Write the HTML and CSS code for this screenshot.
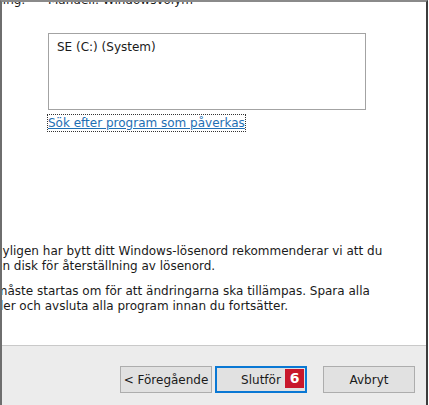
FILE: index.html
```html
<!DOCTYPE html>
<html lang="sv">
<head>
<meta charset="utf-8">
<link rel="stylesheet" href="styles.css">
</head>
<body>
<div class="window">
  <div class="content">
    <div class="inner">
      <div class="row top">
        <span class="label">Beskrivning:</span>
        <span class="value">Manuell: Windowsvolym</span>
      </div>
      <div class="row drives">
        <span class="label">Enheter:</span>
        <div class="value">
          <div class="listbox"><div class="item">SE (C:) (System)</div></div>
          <a class="link" href="#">Sök efter program som påverkas</a>
        </div>
      </div>
      <p class="para first">Om du nyligen har bytt ditt Windows-lösenord rekommenderar vi att du skapar en disk för återställning av lösenord.</p>
      <p class="para">Datorn måste startas om för att ändringarna ska tillämpas. Spara alla öppna filer och avsluta alla program innan du fortsätter.</p>
    </div>
  </div>
  <div class="footer">
    <button class="btn">&lt; Föregående</button>
    <button class="btn primary">Slutför<span class="badge">6</span></button>
    <button class="btn cancel">Avbryt</button>
  </div>
</div>
</body>
</html>
```
FILE: styles.css
```css
html, body {
  margin: 0;
  padding: 0;
  background: #ffffff;
}
body {
  width: 429px;
  height: 405px;
  overflow: hidden;
  font-family: "DejaVu Sans", sans-serif;
  font-size: 12px;
  color: #1a1a1a;
}
.window {
  width: 424px;
  height: 403px;
  border-top: 2px solid #8a8a8a;
  border-left: 2px solid #6e6e6e;
  border-right: 2px solid #3c3c3c;
  display: flex;
  flex-direction: column;
}
.content {
  height: 343px;
  overflow: hidden;
  background: #ffffff;
  border-bottom: 1px solid #c9c9c9;
}
.inner {
  margin-left: -51px;
  width: 480px;
}
.row {
  display: grid;
  grid-template-columns: 97px 1fr;
  line-height: 15px;
}
.top {
  margin-top: -9px;
}
.drives {
  margin-top: 25px;
}
.listbox {
  width: 316px;
  height: 75px;
  border: 1px solid #a3a3a3;
  box-sizing: content-box;
}
.item {
  padding: 6px 0 0 8px;
  line-height: 15px;
}
.link {
  display: inline-block;
  margin-top: 5px;
  color: #1e6fb4;
  text-decoration: underline;
  outline: 1px dotted #333;
  line-height: 16px;
}
.para {
  margin: 0;
  line-height: 15px;
  width: 437px;
}
.para.first {
  margin-top: 113px;
}
.para + .para {
  margin-top: 10px;
}
.footer {
  flex: 1;
  background: #ececec;
  display: flex;
  justify-content: flex-end;
  align-items: flex-start;
  padding: 20px 11px 0 0;
}
.btn {
  width: 92px;
  height: 27px;
  border: 1px solid #adadad;
  background: #e1e1e1;
  font-family: inherit;
  font-size: 12px;
  color: #1a1a1a;
  padding: 0;
  margin: 0;
  position: relative;
}
.btn.primary {
  margin-left: 3px;
  border: 2px solid #0a78d4;
}
.btn.cancel {
  margin-left: 16px;
}
.badge {
  position: absolute;
  right: 1px;
  top: 1px;
  width: 19px;
  height: 19px;
  background: #c8172b;
  color: #fff;
  font-family: "DejaVu Sans", sans-serif;
  font-weight: bold;
  font-size: 14px;
  line-height: 19px;
  text-align: center;
}
```
